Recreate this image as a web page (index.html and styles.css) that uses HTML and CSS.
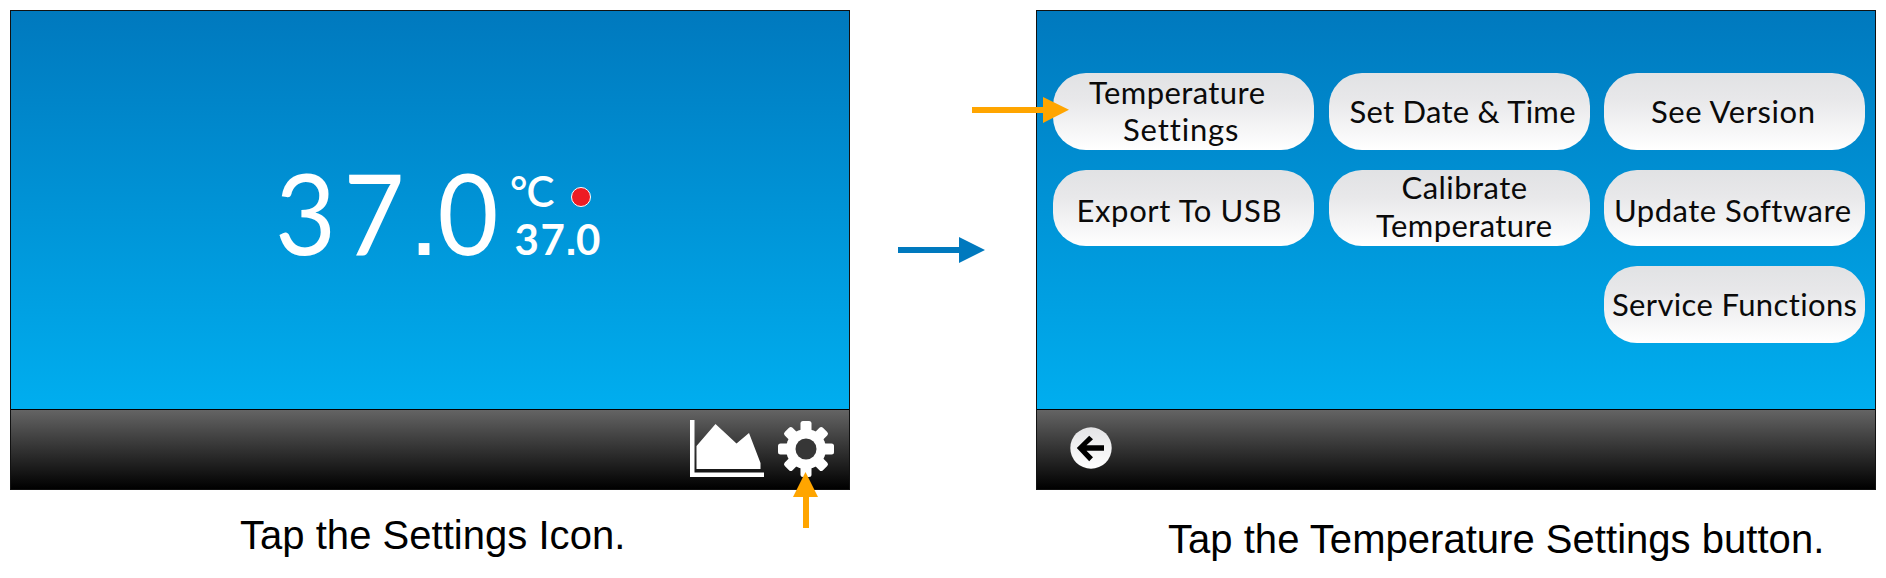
FILE: index.html
```html
<!DOCTYPE html>
<html lang="en">
<head>
<meta charset="utf-8">
<title>Temperature Settings</title>
<link rel="stylesheet" href="styles.css">
</head>
<body>
<main class="steps">
  <section class="step">
    <div class="device">
      <div class="screen home">
        <svg class="readout" viewBox="0 0 340 100" role="img">
          <text class="big" x="0" y="88" textLength="61" lengthAdjust="spacingAndGlyphs">3</text>
          <text class="big" x="68.500" y="88" textLength="61" lengthAdjust="spacingAndGlyphs">7</text>
          <text class="big-dot" x="133.500" y="88">.</text>
          <text class="big" x="162.500" y="88" textLength="61" lengthAdjust="spacingAndGlyphs">0</text>
          <text class="unit" x="235" y="40">°</text>
          <text class="unit" x="251.500" y="39.500">C</text>
          <text class="small" x="239.500" y="88">3</text>
          <text class="small" x="265.500" y="88">7</text>
          <text class="small-dot" x="290.500" y="88">.</text>
          <text class="small" x="301" y="88">0</text>
          <circle class="alarm" cx="306" cy="30" r="9.500"/>
        </svg>
      </div>
      <div class="bar bar-end">
        <svg class="chart-icon" viewBox="0 0 76 60">
          <path d="M2 1h4.500v52.500H76V58H2z"/>
          <path d="M8.500 27 27.500 5l21 19.500L61 14l11.500 30v6h-64z"/>
        </svg>
        <svg class="gear-icon" viewBox="-28 -28 56 56">
          <rect x="-5.500" y="-28" width="11" height="56" rx="2.500"/>
          <rect x="-28" y="-5.500" width="56" height="11" rx="2.500"/>
          <rect x="-5.500" y="-27" width="11" height="54" rx="2.500" transform="rotate(45)"/>
          <rect x="-5.500" y="-27" width="11" height="54" rx="2.500" transform="rotate(-45)"/>
          <circle r="20"/>
          <circle class="hole" r="10.500"/>
        </svg>
      </div>
      <svg class="pointer pointer-up" viewBox="0 0 26 56"><path d="M12.500 0 25 25H16v31h-6V25H0z"/></svg>
    </div>
    <p class="caption">Tap the Settings Icon.</p>
  </section>

  <svg class="next" viewBox="0 0 88 26"><path d="M0 10h61V0l26 13-26 13V16H0z"/></svg>

  <section class="step">
    <div class="device">
      <div class="screen menu">
        <button class="option"><svg class="label" viewBox="0 0 261 77"><text x="36" y="30.500" textLength="176">Temperature</text><text x="70" y="67.500" textLength="115.500">Settings</text></svg></button>
        <button class="option"><svg class="label" viewBox="0 0 261 77"><text x="20.500" y="49.500" textLength="226">Set Date &amp; Time</text></svg></button>
        <button class="option"><svg class="label" viewBox="0 0 261 77"><text x="47" y="49.500" textLength="164">See Version</text></svg></button>
        <button class="option"><svg class="label" viewBox="0 0 261 77"><text x="23.500" y="51.500" textLength="205">Export To USB</text></svg></button>
        <button class="option"><svg class="label" viewBox="0 0 261 77"><text x="72.500" y="29" textLength="125.500">Calibrate</text><text x="47" y="66.500" textLength="176">Temperature</text></svg></button>
        <button class="option"><svg class="label" viewBox="0 0 261 77"><text x="10" y="51.500" textLength="237">Update Software</text></svg></button>
        <button class="option last"><svg class="label" viewBox="0 0 261 77"><text x="8" y="50" textLength="245">Service Functions</text></svg></button>
      </div>
      <div class="bar bar-start">
        <svg class="back-icon" viewBox="-21 -21 42 42">
          <defs><linearGradient id="disc" x2="0" y2="1"><stop stop-color="#e4e4e6"/><stop offset="1" stop-color="#fff"/></linearGradient></defs>
          <circle r="20.700" fill="url(#disc)"/>
          <path class="back-arrow" d="M13-2.800H-4.500L2-8.700-1.800-12.200-14.200 0-1.800 13.200 2 9.300-4.500 2.800H13z"/>
        </svg>
      </div>
      <svg class="pointer pointer-right" viewBox="0 0 98 26"><path d="M0 10h71V0l26 12.800L71 26V16H0z"/></svg>
    </div>
    <p class="caption caption-low">Tap the Temperature Settings button.</p>
  </section>
</main>
</body>
</html>
```
FILE: styles.css
```css
body {
  margin: 0;
  background: #fff;
  color: #000;
  font-family: "Liberation Sans", Arial, sans-serif;
}
.steps {
  display: flex;
  align-items: flex-start;
  box-sizing: border-box;
  height: 578px;
  padding: 10px;
  overflow: hidden;
}
svg { display: block; }
.step { width: 840px; flex: none; }
.device {
  position: relative;
  box-sizing: border-box;
  width: 840px;
  height: 480px;
  border: 1px solid #111;
}
.screen {
  box-sizing: border-box;
  height: 398px;
  background: linear-gradient(#0079be, #00aeef);
}
.bar {
  display: flex;
  align-items: center;
  box-sizing: border-box;
  height: 80px;
  border-top: 1px solid #000;
  background: linear-gradient(#646464, #000);
}
.home { padding: 156px 0 0 264px; }
.readout { width: 340px; height: 100px; overflow: visible; fill: #fff; font-family: Lato, sans-serif; }
.big { font-size: 113px; }
.big-dot { font: 112px "Liberation Sans", sans-serif; }
.unit { font-size: 42px; font-weight: 600; }
.small { font-size: 42px; font-weight: 700; }
.small-dot { font: 700 40px "Liberation Sans", sans-serif; }
.alarm { fill: #ed1c24; stroke: #fff; stroke-width: 1; }
.bar-end { justify-content: flex-end; gap: 14px; padding: 0 15px 2px 0; }
.bar-start { padding-left: 33px; }
.chart-icon { width: 76px; height: 60px; fill: #fff; }
.gear-icon { width: 56px; height: 56px; fill: #fff; }
.gear-icon .hole { fill: #363636; }
.back-icon { width: 42px; height: 42px; margin-top: -3px; }
.pointer { position: absolute; fill: #ffa500; }
.pointer-up { left: 781.5px; top: 461px; width: 26px; height: 56px; }
.pointer-right { left: -65px; top: 86px; width: 98px; height: 26px; }
.next { flex: none; width: 88px; height: 26px; margin: 227px 50px 0 48px; fill: #0079be; }
.menu {
  display: grid;
  grid-template-columns: repeat(3, 261px);
  grid-template-rows: repeat(3, 76.5px);
  gap: 20px 14.2px;
  padding: 62px 0 0 16.4px;
}
.option {
  padding: 0;
  border: 0;
  border-radius: 33px;
  background: linear-gradient(#e1e2e4, #e8e8ea 35%, #fff);
}
.last { grid-column: 3; }
.label {
  width: 261px;
  height: 77px;
  overflow: visible;
  font: 31px Lato, sans-serif;
  font-variant-ligatures: none;
  fill: #0a0a0a;
}
.caption {
  margin: 22px 0 0 230px;
  font-size: 40px;
  line-height: 46px;
  letter-spacing: 0.03px;
  white-space: nowrap;
}
.caption-low { margin: 26px 0 0 132px; }
```
